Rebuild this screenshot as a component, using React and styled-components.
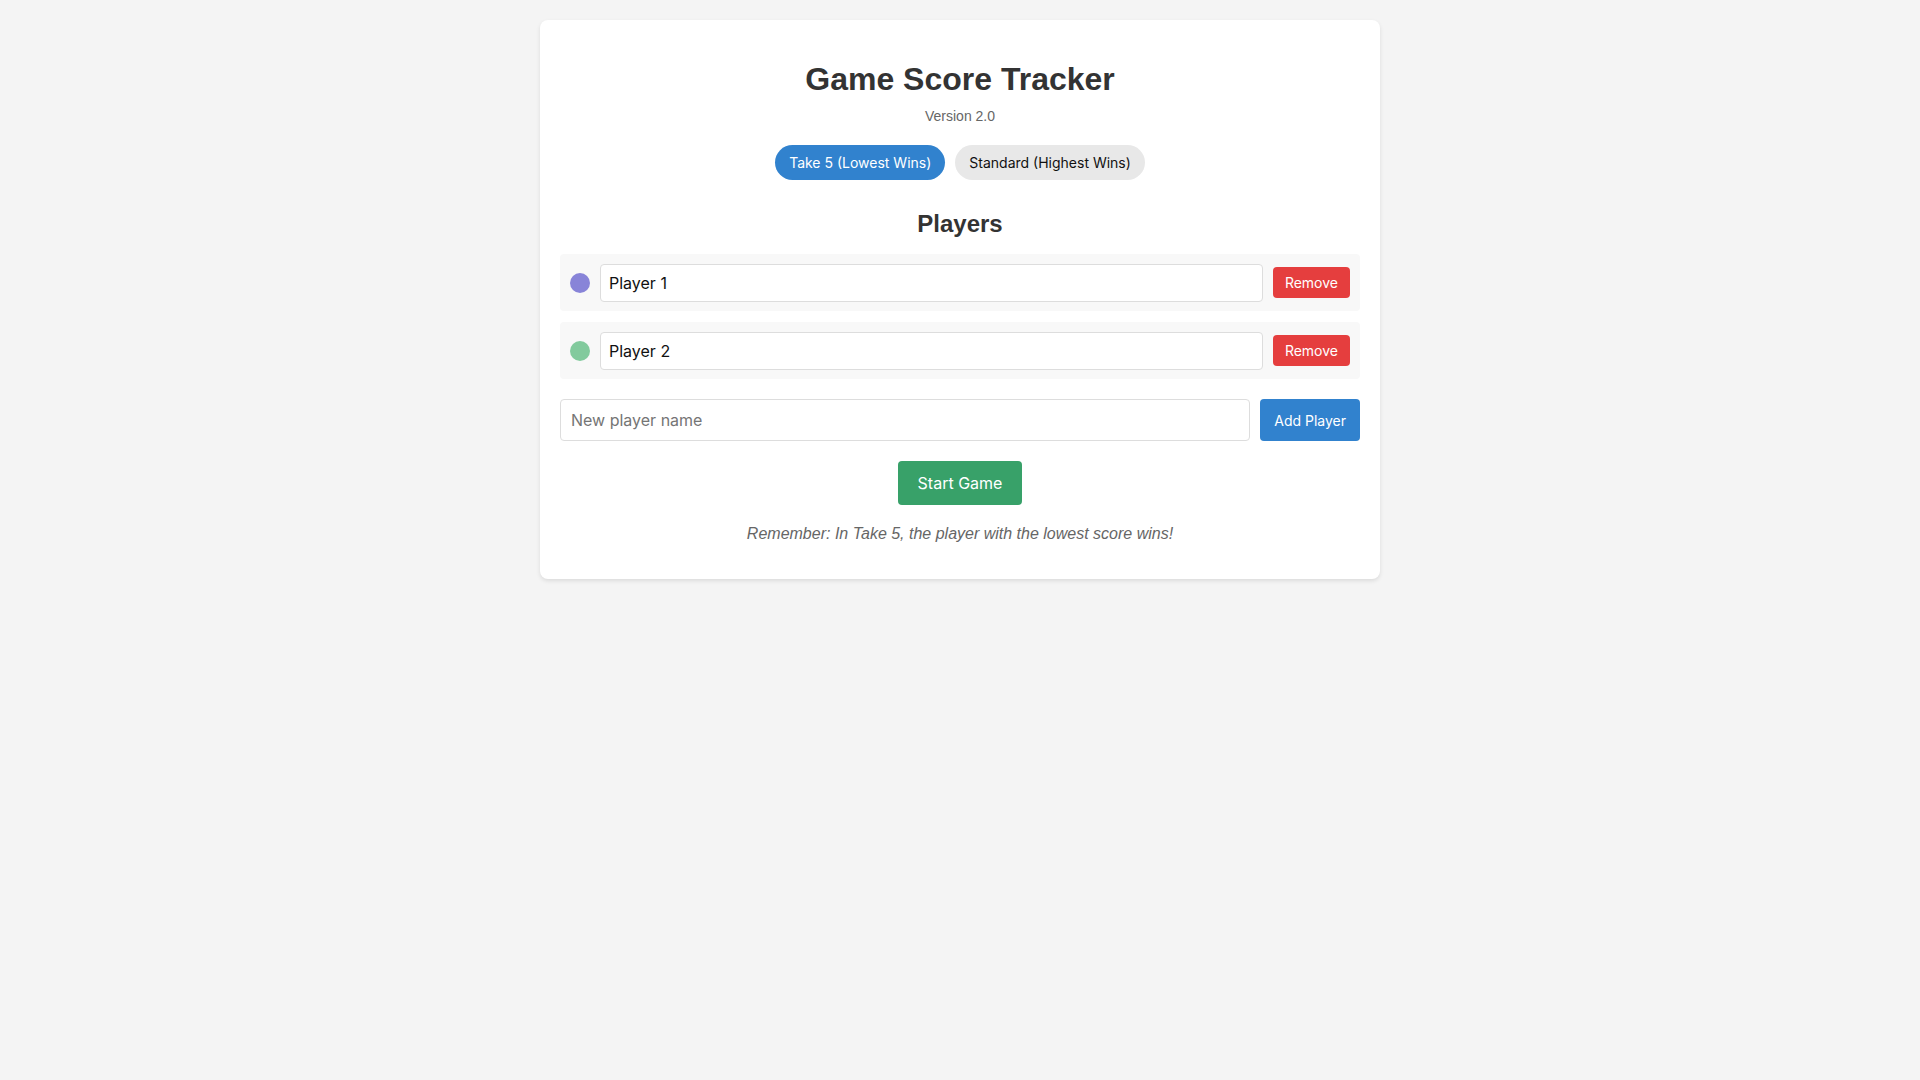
import React, { useState } from 'react';
import styled, { createGlobalStyle } from 'styled-components';

const GlobalStyle = createGlobalStyle`
    body {
        margin: 0;
        background: #f4f4f4;
        font-family: "Liberation Sans", Arial, sans-serif;
        color: #333;
    }
`;

const initialPlayers = [
    { id: 1, name: 'Player 1', color: '#8884d8' },
    { id: 2, name: 'Player 2', color: '#82ca9d' },
];

const App = () => {
    const [mode, setMode] = useState('take5');
    const [players, setPlayers] = useState(initialPlayers);
    const [newName, setNewName] = useState('');

    const removePlayer = (id) => setPlayers(players.filter(p => p.id !== id));

    const addPlayer = () => {
        if (!newName.trim()) return;
        setPlayers([...players, { id: Date.now(), name: newName.trim(), color: '#ffc658' }]);
        setNewName('');
    };

    return (
        <>
            <GlobalStyle />
            <Page>
                <Card>
                    <Title>Game Score Tracker</Title>
                    <Version>Version 2.0</Version>
                    <ModeGroup>
                        <ModeBtn active={mode === 'take5'} onClick={() => setMode('take5')}>Take 5 (Lowest Wins)</ModeBtn>
                        <ModeBtn active={mode === 'standard'} onClick={() => setMode('standard')}>Standard (Highest Wins)</ModeBtn>
                    </ModeGroup>

                    <SectionTitle>Players</SectionTitle>
                    <PlayerList>
                        {players.map(p => (
                            <PlayerRow key={p.id}>
                                <Dot color={p.color} />
                                <NameInput
                                    value={p.name}
                                    onChange={e => setPlayers(players.map(x => x.id === p.id ? { ...x, name: e.target.value } : x))}
                                />
                                <RemoveBtn onClick={() => removePlayer(p.id)}>Remove</RemoveBtn>
                            </PlayerRow>
                        ))}
                    </PlayerList>

                    <AddRow>
                        <NewInput
                            placeholder="New player name"
                            value={newName}
                            onChange={e => setNewName(e.target.value)}
                        />
                        <AddBtn onClick={addPlayer}>Add Player</AddBtn>
                    </AddRow>

                    <StartWrap>
                        <StartBtn>Start Game</StartBtn>
                    </StartWrap>

                    <Note>
                        {mode === 'take5'
                            ? 'Remember: In Take 5, the player with the lowest score wins!'
                            : 'Remember: In Standard mode, the player with the highest score wins!'}
                    </Note>
                </Card>
            </Page>
        </>
    );
};

export default App;

const Page = styled.div`
    padding: 20px;
`;

const Card = styled.div`
    max-width: 800px;
    margin: 0 auto;
    padding: 20px;
    background: #fff;
    border-radius: 8px;
    box-shadow: 0 2px 4px rgba(0, 0, 0, 0.1);
    text-align: center;
`;

const Title = styled.h1`
    font-size: 32px;
    margin: 21px 0 10px;
    color: #333;
`;

const Version = styled.p`
    font-size: 14px;
    color: #666;
    margin: 0;
`;

const ModeGroup = styled.div`
    display: flex;
    justify-content: center;
    gap: 10px;
    margin: 21px 0 30px;
`;

const ModeBtn = styled.button`
    font-family: Inter, "Noto Sans", sans-serif;
    font-size: 14px;
    padding: 9px 14px;
    border: none;
    border-radius: 20px;
    cursor: pointer;
    background: ${p => p.active ? '#3182ce' : '#e8e8e8'};
    color: ${p => p.active ? '#fff' : '#111'};
`;

const SectionTitle = styled.h2`
    font-size: 24px;
    margin: 0 0 16px;
    color: #333;
`;

const PlayerList = styled.div`
    display: flex;
    flex-direction: column;
    gap: 11px;
`;

const PlayerRow = styled.div`
    display: flex;
    align-items: center;
    gap: 10px;
    padding: 9.5px 10px;
    background: #f8f8f8;
    border-radius: 4px;
`;

const Dot = styled.span`
    width: 20px;
    height: 20px;
    border-radius: 50%;
    flex-shrink: 0;
    background: ${p => p.color};
`;

const NameInput = styled.input`
    flex: 1;
    font-family: Inter, "Noto Sans", sans-serif;
    font-size: 16px;
    line-height: 20px;
    padding: 8px;
    border: 1px solid #ddd;
    border-radius: 4px;
    color: #111;
    outline: none;
`;

const Button = styled.button`
    font-family: Inter, "Noto Sans", sans-serif;
    border: none;
    border-radius: 4px;
    color: #fff;
    cursor: pointer;
`;

const RemoveBtn = styled(Button)`
    font-size: 14px;
    padding: 7px 12px;
    background: #e53e3e;
`;

const AddRow = styled.div`
    display: flex;
    gap: 10px;
    margin-top: 20px;
`;

const NewInput = styled(NameInput)`
    padding: 10px;
`;

const AddBtn = styled(Button)`
    font-size: 14px;
    padding: 0 14px;
    background: #3182ce;
`;

const StartWrap = styled.div`
    margin: 20px 0;
`;

const StartBtn = styled(Button)`
    font-size: 16px;
    padding: 12px 20px;
    background: #38a169;
`;

const Note = styled.p`
    font-style: italic;
    font-size: 16px;
    color: #666;
    margin: 0 0 16px;
`;
